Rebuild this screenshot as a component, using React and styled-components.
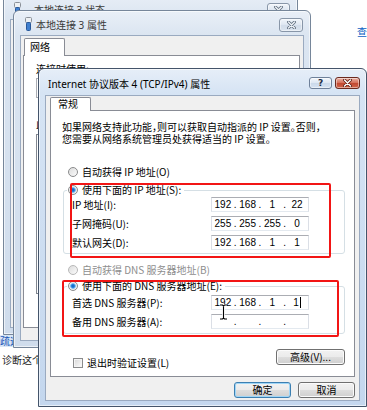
import React from 'react';
import styled, { createGlobalStyle } from 'styled-components';

const GlobalStyle = createGlobalStyle`
  html, body {
    margin: 0;
    padding: 0;
    background: #fff;
  }
  body {
    font-family: "Noto Sans CJK SC", "Noto Sans", sans-serif;
    font-size: 10px;
    color: #000;
    font-feature-settings: "halt";
  }
  * {
    box-sizing: border-box;
  }
`;

const Desktop = styled.div`
    position: relative;
    width: 367px;
    height: 410px;
    overflow: hidden;
    background: #fff;
`;

const ExplorerText = styled.div`
    position: absolute;
    left: ${p => p.$x}px;
    top: ${p => p.$y}px;
    height: 12px;
    line-height: 12px;
    padding: 0 2px;
    white-space: nowrap;
    color: ${p => p.$color || '#222'};
    background: ${p => p.$bg || 'transparent'};
`;

const Window = styled.div`
    position: absolute;
    left: ${p => p.$x}px;
    top: ${p => p.$y}px;
    width: ${p => p.$w}px;
    height: ${p => p.$h}px;
    display: flex;
    flex-direction: column;
    padding: 0 6px 6px;
    border: 1px solid ${p => (p.$active ? '#44546a' : '#76869a')};
    border-radius: 6px 6px 0 0;
    background: ${p =>
        p.$active
            ? 'linear-gradient(180deg, #e6eef8 0px, #d6e4f4 24px, #c4d7ee 100%)'
            : 'linear-gradient(180deg, #e9eff7 0px, #dbe5f1 24px, #cfdcec 100%)'};
    box-shadow: inset 0 0 0 1px rgba(255, 255, 255, 0.6);
`;

const TitleBar = styled.div`
    display: flex;
    align-items: flex-start;
    height: ${p => p.$h}px;
    flex: none;
`;

const Title = styled.div`
    padding: ${p => p.$top}px 0 0 ${p => p.$pad}px;
    line-height: 12px;
    font-family: "Noto Sans", "Noto Sans CJK SC", sans-serif;
    font-size: 10px;
    color: ${p => (p.$dim ? '#3a3a3a' : '#000')};
    white-space: nowrap;
`;

const IconSlot = styled.div`
    margin: ${p => p.$top}px 0 0 ${p => p.$left}px;
    display: flex;
`;

const Caption = styled.div`
    display: flex;
    gap: 3px;
    margin: ${p => p.$top}px ${p => p.$right || 0}px 0 auto;
`;

const capSkins = {
    close: `
        border-color: #6b2a1f;
        background: linear-gradient(180deg, #eab3a6 0%, #d7745f 45%, #c24a33 55%, #d2664b 100%);
    `,
    help: `
        border-color: #6f819a;
        color: #1f2f45;
        background: linear-gradient(180deg, #f3f7fc 0%, #dfe8f3 45%, #cbd9ea 55%, #d6e3f2 100%);
    `,
    idle: `
        border-color: #8896a8;
        background: linear-gradient(180deg, #f1f5fa 0%, #e0e8f2 45%, #d2dce9 55%, #dbe4ef 100%);
    `,
};

const CapButton = styled.div`
    display: flex;
    align-items: center;
    justify-content: center;
    width: ${p => p.$w}px;
    height: ${p => p.$h}px;
    border: 1px solid;
    border-radius: 3px;
    font-family: "DejaVu Sans", sans-serif;
    font-size: 9px;
    font-weight: bold;
    box-shadow: inset 0 0 0 1px rgba(255, 255, 255, 0.45);
    ${p => capSkins[p.$kind]}
`;

const Body = styled.div`
    flex: 1;
    display: flex;
    flex-direction: column;
    padding: ${p => p.$pad};
    background: #f0f0f0;
    border: 1px solid #9aaac0;
`;

const TabStrip = styled.div`
    display: flex;
    padding-left: ${p => p.$pad}px;
    margin-top: ${p => p.$top}px;
`;

const Tab = styled.div`
    position: relative;
    z-index: 1;
    width: ${p => p.$w}px;
    height: ${p => p.$h}px;
    padding-left: ${p => p.$pl}px;
    line-height: ${p => p.$h - 2}px;
    background: #fff;
    border: 1px solid #898c95;
    border-bottom: none;
    border-radius: 2px 2px 0 0;
`;

const TabPanel = styled.div`
    width: ${p => p.$w}px;
    height: ${p => p.$h}px;
    margin-top: -1px;
    padding: ${p => p.$pad};
    background: #fff;
    border: 1px solid #898c95;
    display: flex;
    flex-direction: column;
    align-items: flex-start;
`;

const Para = styled.p`
    margin: 0;
    line-height: 12px;
    white-space: nowrap;
`;

const OptionRow = styled.div`
    display: flex;
    align-items: center;
    gap: 4px;
    height: 12px;
    line-height: 12px;
    margin: ${p => p.$top || 0}px 0 0 ${p => p.$left || 0}px;
    padding-right: ${p => p.$right || 0}px;
    color: ${p => (p.$disabled ? '#8e8e8e' : '#000')};
    white-space: nowrap;
`;

const Radio = styled.span`
    flex: none;
    width: 10px;
    height: 10px;
    border-radius: 50%;
    border: 1px solid ${p => (p.$disabled ? '#b8b8b8' : '#8a8b8c')};
    background: ${p =>
        p.$checked
            ? 'radial-gradient(circle, #0b5cb8 0, #2f86dc 1.6px, #8cc4f0 2.6px, #f4f4f4 3.2px, #e4e4e4 5px)'
            : 'linear-gradient(135deg, #dcdcdc, #fbfbfb)'};
`;

const Check = styled.span`
    flex: none;
    width: 10px;
    height: 10px;
    border: 1px solid #8a8b8c;
    background: linear-gradient(135deg, #d6d6d6, #fdfdfd);
    box-shadow: inset 0 0 0 1px #f4f4f4;
`;

const GroupBox = styled.fieldset`
    width: 282px;
    margin: ${p => p.$top}px 0 0 1px;
    padding: 0 0 ${p => p.$bottom}px 3px;
    min-inline-size: 0;
    border: 1px solid #d5dfe5;
    border-radius: 3px;
`;

const Legend = styled.legend`
    padding: 0 2px 0 1px;
`;

const Fields = styled.div`
    display: flex;
    flex-direction: column;
    gap: 4px;
    margin-top: ${p => p.$top}px;
    padding-left: 5px;
`;

const FieldRow = styled.div`
    display: flex;
    align-items: center;
    height: 15px;
`;

const FieldLabel = styled.span`
    width: 139px;
    white-space: nowrap;
`;

const IpBox = styled.div`
    width: 98px;
    height: 15px;
    display: grid;
    grid-template-columns: 1fr 3px 1fr 3px 1fr 3px 1fr;
    align-items: center;
    background: #fff;
    border: 1px solid #dbdfe6;
    border-top-color: #abadb3;
    border-bottom-color: #e3e9ef;
    font-family: "Liberation Sans", sans-serif;
    font-size: 10px;
    line-height: 13px;
`;

const Octet = styled.span`
    text-align: center;
    white-space: nowrap;
`;

const Dot = styled.span`
    text-align: center;
`;

const Caret = styled.span`
    display: inline-block;
    width: 1px;
    height: 11px;
    margin-left: 1px;
    vertical-align: -2px;
    background: #000;
`;

const Footer = styled.div`
    display: flex;
    justify-content: space-between;
    align-items: flex-start;
    width: 283px;
    margin-top: 15px;
`;

const PushButton = styled.div`
    width: ${p => p.$w}px;
    height: 16px;
    line-height: 14px;
    text-align: center;
    border: 1px solid ${p => (p.$default ? '#3c7fb1' : '#707070')};
    border-radius: 3px;
    background: linear-gradient(180deg, #f2f2f2 0%, #ebebeb 48%, #dddddd 52%, #cfcfcf 100%);
    box-shadow: inset 0 0 0 1px ${p => (p.$default ? '#9fd6f7' : '#fbfbfb')};
    white-space: nowrap;
`;

const ButtonRow = styled.div`
    display: flex;
    justify-content: flex-end;
    gap: 7px;
    margin-top: 5px;
`;

const ComboBox = styled.div`
    width: 250px;
    height: 20px;
    margin-top: 3px;
    background: #fff;
    border: 1px solid #abadb3;
`;

const ListBox = styled.div`
    width: 250px;
    height: 160px;
    margin-top: 4px;
    background: #fff;
    border: 1px solid #828790;
`;

const Mark = styled.div`
    position: absolute;
    left: ${p => p.$x}px;
    top: ${p => p.$y}px;
    width: ${p => p.$w}px;
    height: ${p => p.$h}px;
    border: 2px solid #f21515;
    border-radius: 2px;
`;

const Pointer = styled.svg`
    position: absolute;
    left: 219px;
    top: 304px;
`;

const CloseGlyph = ({ light }) => (
    <svg width="11" height="8" viewBox="0 0 11 8">
        <path d="M2.5 1 L8.5 7 M8.5 1 L2.5 7" stroke={light ? '#5d6b7c' : '#5a1a10'} strokeWidth="3" strokeLinecap="round" />
        <path d="M2.5 1 L8.5 7 M8.5 1 L2.5 7" stroke={light ? '#eef2f7' : '#ffffff'} strokeWidth="1.5" strokeLinecap="round" />
    </svg>
);

const PlugIcon = () => (
    <svg width="9" height="14" viewBox="0 0 9 14">
        <rect x="1.5" y="0.5" width="6" height="5" rx="1" fill="#eef1f4" stroke="#8a9099" />
        <rect x="2.5" y="5.5" width="4" height="8" rx="1" fill="#3f7fcf" stroke="#28589a" />
    </svg>
);

const IpField = ({ value, caret }) => {
    const parts = value ? value.split('.') : ['', '', '', ''];
    return (
        <IpBox>
            {parts.map((part, i) => (
                <React.Fragment key={i}>
                    {i > 0 && <Dot>.</Dot>}
                    <Octet>
                        {part}
                        {caret && i === 3 && <Caret />}
                    </Octet>
                </React.Fragment>
            ))}
        </IpBox>
    );
};

const ipRows = [
    { label: 'IP 地址(I):', value: '192.168.1.22' },
    { label: '子网掩码(U):', value: '255.255.255.0' },
    { label: '默认网关(D):', value: '192.168.1.1' },
];

const dnsRows = [
    { label: '首选 DNS 服务器(P):', value: '192.168.1.1', caret: true },
    { label: '备用 DNS 服务器(A):', value: '' },
];

const App = () => {
    return (
        <Desktop>
            <GlobalStyle />

            <ExplorerText $x={355} $y={26} $color="#0b5fc4">查</ExplorerText>
            <ExplorerText $x={-2} $y={335} $color="#1a56b8" $bg="#d9e7f6">疏远</ExplorerText>
            <ExplorerText $x={0} $y={354}>诊断这个连接</ExplorerText>

            <Window $x={3} $y={-8} $w={295} $h={343}>
                <TitleBar $h={26}>
                    <IconSlot $left={3} $top={9}><PlugIcon /></IconSlot>
                    <Title $pad={12} $top={11} $dim>本地连接 3 状态</Title>
                    <Caption $top={10} $right={1}>
                        <CapButton $kind="idle" $w={23} $h={14}><CloseGlyph light /></CapButton>
                    </Caption>
                </TitleBar>
                <Body $pad="0" />
            </Window>

            <Window $x={13} $y={10} $w={298} $h={338}>
                <TitleBar $h={24}>
                    <IconSlot $left={4} $top={6}><PlugIcon /></IconSlot>
                    <Title $pad={3} $top={8} $dim>本地连接 3 属性</Title>
                    <Caption $top={7} $right={1}>
                        <CapButton $kind="idle" $w={24} $h={14}><CloseGlyph light /></CapButton>
                    </Caption>
                </TitleBar>
                <Body $pad="0 2px">
                    <TabStrip $pad={1} $top={2}>
                        <Tab $w={41} $h={18} $pl={5}>网络</Tab>
                    </TabStrip>
                    <TabPanel $w={277} $h={273} $pad="7px 12px">
                        <Para>连接时使用:</Para>
                        <ComboBox />
                        <Para style={{ marginTop: 20 }}>此连接使用下列项目(O):</Para>
                        <ListBox />
                    </TabPanel>
                </Body>
            </Window>

            <Window $x={38} $y={68} $w={329} $h={339} $active>
                <TitleBar $h={26}>
                    <Title $pad={3} $top={9}>Internet 协议版本 4 (TCP/IPv4) 属性</Title>
                    <Caption $top={8}>
                        <CapButton $kind="help" $w={23} $h={12}>?</CapButton>
                        <CapButton $kind="close" $w={25} $h={12}><CloseGlyph /></CapButton>
                    </Caption>
                </TitleBar>
                <Body $pad="1px 4px 2px 4px">
                    <TabStrip $pad={0} $top={0}>
                        <Tab $w={41} $h={14} $pl={7}>常规</Tab>
                    </TabStrip>
                    <TabPanel $w={305} $h={267} $pad="10px 0 0 11px">
                        <Para>
                            如果网络支持此功能，则可以获取自动指派的 IP 设置。否则，
                            <br />
                            您需要从网络系统管理员处获得适当的 IP 设置。
                        </Para>

                        <OptionRow $top={21} $left={6}>
                            <Radio />
                            自动获得 IP 地址(O)
                        </OptionRow>

                        <GroupBox $top={6} $bottom={3}>
                            <Legend>
                                <OptionRow $right={1}>
                                    <Radio $checked />
                                    使用下面的 IP 地址(S):
                                </OptionRow>
                            </Legend>
                            <Fields $top={1}>
                                {ipRows.map(row => (
                                    <FieldRow key={row.label}>
                                        <FieldLabel>{row.label}</FieldLabel>
                                        <IpField value={row.value} />
                                    </FieldRow>
                                ))}
                            </Fields>
                        </GroupBox>

                        <OptionRow $top={10} $left={6} $disabled>
                            <Radio $disabled />
                            自动获得 DNS 服务器地址(B)
                        </OptionRow>

                        <GroupBox $top={4} $bottom={4}>
                            <Legend>
                                <OptionRow $right={1}>
                                    <Radio $checked />
                                    使用下面的 DNS 服务器地址(E):
                                </OptionRow>
                            </Legend>
                            <Fields $top={3}>
                                {dnsRows.map(row => (
                                    <FieldRow key={row.label}>
                                        <FieldLabel>{row.label}</FieldLabel>
                                        <IpField value={row.value} caret={row.caret} />
                                    </FieldRow>
                                ))}
                            </Fields>
                        </GroupBox>

                        <Footer>
                            <OptionRow $top={8} $left={11}>
                                <Check />
                                退出时验证设置(L)
                            </OptionRow>
                            <PushButton $w={69}>高级(V)...</PushButton>
                        </Footer>
                    </TabPanel>
                    <ButtonRow>
                        <PushButton $w={57} $default>确定</PushButton>
                        <PushButton $w={57}>取消</PushButton>
                    </ButtonRow>
                </Body>
            </Window>

            <Mark $x={70} $y={183} $w={261} $h={75} />
            <Mark $x={62} $y={280} $w={277} $h={57} />

            <Pointer width="9" height="16" viewBox="0 0 9 16">
                <path d="M1 1 H3.5 L4.5 2 L5.5 1 H8 M4.5 2 V14 M1 15 H3.5 L4.5 14 L5.5 15 H8" fill="none" stroke="#fff" strokeWidth="2.6" />
                <path d="M1 1 H3.5 L4.5 2 L5.5 1 H8 M4.5 2 V14 M1 15 H3.5 L4.5 14 L5.5 15 H8" fill="none" stroke="#000" strokeWidth="1.1" />
            </Pointer>
        </Desktop>
    );
};

export default App;
